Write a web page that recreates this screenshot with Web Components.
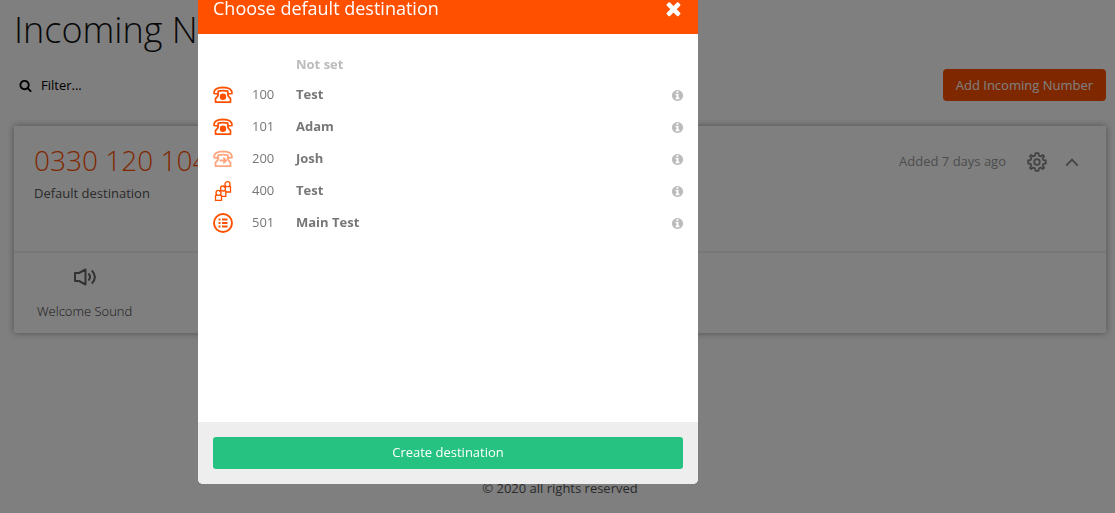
<!DOCTYPE html>
<html lang="en">
<head>
<meta charset="utf-8">
<meta name="viewport" content="width=device-width, initial-scale=1">
<title>Incoming Numbers</title>
<style>
  html, body { margin: 0; }
  body { background: #fff; color: #555; font: 13px/20px "Open Sans", "Noto Sans", sans-serif; }
</style>
</head>
<body>
<numbers-page>
  <number-card number="0330 120 104" added="Added 7 days ago"></number-card>
</numbers-page>
<destination-dialog heading="Choose default destination">
  <destination-row name="Not set"></destination-row>
  <destination-row icon="phone" ext="100" name="Test"></destination-row>
  <destination-row icon="phone" ext="101" name="Adam"></destination-row>
  <destination-row icon="forward" ext="200" name="Josh"></destination-row>
  <destination-row icon="group" ext="400" name="Test"></destination-row>
  <destination-row icon="menu" ext="501" name="Main Test"></destination-row>
</destination-dialog>

<script>
const handset = '<path d="M1 7.500Q.5 1.500 10 1.300Q19.500 1.500 19 7.500L14.800 8V5.200Q10 4.200 5.200 5.200V8Z"/><path d="M5.500 8Q5 10.500 2.500 12.500V16.200H17.500V12.500Q15 10.500 14.500 8"/>';
const ICONS = {
  phone: ['0 0 20 18', '<g fill="none" stroke="currentColor" stroke-width="1.700" stroke-linejoin="round">' + handset + '</g><circle cx="10" cy="10.800" r="3.200" fill="currentColor"/>'],
  forward: ['0 0 20 18', '<g fill="none" stroke="currentColor" stroke-width="1.800" stroke-linejoin="round">' + handset + '<path d="M6.500 10.500H13M10.300 7.700L13.200 10.500L10.300 13.300"/></g>'],
  group: ['0 0 20 20', '<g fill="none" stroke="currentColor" stroke-width="1.300"><circle cx="14.500" cy="3.200" r="2.500"/><path d="M12.500 5.500H11.500V7M12.800 11H17.500V5.500H16.200"/><circle cx="10" cy="7.500" r="2.500"/><path d="M8 10H7V11M8.500 15.300H12.800V10H11.700"/><circle cx="5.500" cy="11.800" r="2.500"/><path d="M4 14.300H2.500V19.300H8.500V14.300H7"/></g>'],
  menu: ['0 0 20 20', '<circle cx="10" cy="10" r="9" fill="none" stroke="currentColor" stroke-width="1.900"/><path d="M5.500 6.500H7.500M5.500 10H7.500M5.500 13.500H7.500M9 6.500H14.500M9 10H14.500M9 13.500H14.500" stroke="currentColor" stroke-width="1.800"/>'],
  search: ['0 0 1792 1792', '<path fill="currentColor" d="M1216 832q0-185-131.500-316.500t-316.500-131.500-316.500 131.500-131.500 316.500 131.500 316.500 316.500 131.500 316.500-131.500 131.500-316.500zm512 832q0 52-38 90t-90 38q-54 0-90-38l-343-342q-179 124-399 124-143 0-273.500-55.500t-225-150-150-225-55.500-273.500 55.500-273.500 150-225 225-150 273.500-55.500 273.500 55.500 225 150 150 225 55.500 273.500q0 220-124 399l343 343q37 37 37 90z"/>'],
  close: ['0 0 1792 1792', '<path fill="currentColor" d="M1490 1322q0 40-28 68l-136 136q-28 28-68 28t-68-28l-294-294-294 294q-28 28-68 28t-68-28l-136-136q-28-28-28-68t28-68l294-294-294-294q-28-28-28-68t28-68l136-136q28-28 68-28t68 28l294 294 294-294q28-28 68-28t68 28l136 136q28 28 28 68t-28 68l-294 294 294 294q28 28 28 68z"/>'],
  info: ['0 0 1792 1792', '<path fill="currentColor" d="M1152 1376v-160q0-14-9-23t-23-9h-96v-512q0-14-9-23t-23-9h-320q-14 0-23 9t-9 23v160q0 14 9 23t23 9h96v320h-96q-14 0-23 9t-9 23v160q0 14 9 23t23 9h448q14 0 23-9t9-23zm-128-896v-160q0-14-9-23t-23-9h-192q-14 0-23 9t-9 23v160q0 14 9 23t23 9h192q14 0 23-9t9-23zm640 416q0 209-103 385.500t-279.500 279.500-385.500 103-385.500-103-279.500-279.500-103-385.500 103-385.500 279.500-279.500 385.500-103 385.500 103 279.500 279.500 103 385.500z"/>'],
  gear: ['0 0 20 20', '<g fill="none" stroke="currentColor" stroke-width="1.800" stroke-linejoin="round"><circle cx="10" cy="10" r="2.800"/><path d="M8.500 1.200H11.500L12 3.700L13.700 4.400L15.800 3L17.100 4.300L15.600 6.300L16.300 8L18.800 8.500V11.500L16.300 12L15.600 13.700L17.100 15.800L15.800 17.100L13.700 15.600L12 16.300L11.500 18.800H8.500L8 16.300L6.300 15.600L4.200 17.100L2.900 15.800L4.400 13.700L3.700 12L1.200 11.500V8.500L3.700 8L4.400 6.300L2.900 4.300L4.200 3L6.300 4.400L8 3.700Z"/></g>'],
  chevron: ['0 0 14 14', '<path d="M1.200 10.700L7 4.700L12.800 10.700" fill="none" stroke="currentColor" stroke-width="1.900"/>'],
  sound: ['0 0 24 20', '<g fill="none" stroke="currentColor" stroke-width="2" stroke-linejoin="round"><path d="M2 6H6L12.500 2.500V17.500L6 14H2Z"/><path d="M15.500 6.500Q18.500 10 15.500 13.500M18.800 3.500Q25 10 18.800 16.500"/></g>']
};

class UiElement extends HTMLElement {
  connectedCallback() {
    if (this.shadowRoot) return;
    this.attachShadow({ mode: 'open' }).innerHTML = this.render();
  }
}

customElements.define('ui-icon', class extends UiElement {
  render() {
    const [box, body] = ICONS[this.getAttribute('name')];
    return `<style>
      :host { display: inline-block; flex: none; width: 20px; height: 20px; }
      svg { display: block; width: 100%; height: 100%; }
    </style><svg viewBox="${box}" aria-hidden="true">${body}</svg>`;
  }
});

customElements.define('number-card', class extends UiElement {
  render() {
    return `<style>
      :host { display: block; background: #fff; box-shadow: 0 0 7px rgba(0,0,0,.4); }
      header { display: flex; justify-content: space-between; padding: 14px 27px 0 20px; height: 111px; border-bottom: 2px solid #f0f0f0; }
      h2 { margin: 0; font-size: 28px; line-height: 40px; font-weight: 300; color: #ff5000; }
      p { margin: 0; padding-top: 3px; }
      .tools { display: flex; align-items: center; height: 44px; color: #999; }
      .tools span { padding-bottom: 2px; }
      button { display: flex; border: 0; background: none; padding: 0; color: #888; }
      .gear { margin: 0 18px 0 21px; }
      .chevron ui-icon { width: 14px; height: 14px; }
      .sound { display: inline-flex; flex-direction: column; align-items: center; padding: 14px 23px 12px; gap: 14px; font: inherit; font-weight: 300; color: #333; }
      .sound ui-icon { width: 24px; color: #666; }
    </style>
    <header>
      <div><h2>${this.getAttribute('number')}</h2><p>Default destination</p></div>
      <div class="tools"><span>${this.getAttribute('added')}</span>
        <button class="gear" aria-label="Settings"><ui-icon name="gear"></ui-icon></button>
        <button class="chevron" aria-label="Collapse"><ui-icon name="chevron"></ui-icon></button></div>
    </header>
    <button class="sound"><ui-icon name="sound"></ui-icon>Welcome Sound</button>`;
  }
});

customElements.define('numbers-page', class extends UiElement {
  render() {
    return `<style>
      :host { display: block; padding: 5px 9px 0 14px; }
      h1 { margin: 0; font-size: 36px; line-height: 50px; font-weight: 300; color: #111; }
      .bar { display: flex; justify-content: space-between; align-items: center; margin: 14px 0 25px; }
      label { display: flex; align-items: center; gap: 9px; padding-left: 5px; color: #000; }
      label ui-icon { width: 13px; height: 13px; }
      input { border: 0; padding: 0; outline: 0; font: inherit; color: #000; background: none; width: 140px; }
      input::placeholder { color: #000; opacity: 1; }
      .add { border: 0; border-radius: 4px; background: #ff5000; color: #fff; font: inherit; height: 32px; padding: 0 13px; }
      footer { padding-top: 145px; text-align: center; }
    </style>
    <h1>Incoming Numbers</h1>
    <div class="bar">
      <label><ui-icon name="search"></ui-icon><input type="text" placeholder="Filter..." aria-label="Filter"></label>
      <button class="add">Add Incoming Number</button>
    </div>
    <slot></slot>
    <footer>© 2020 all rights reserved</footer>`;
  }
});

customElements.define('destination-row', class extends UiElement {
  render() {
    const icon = this.getAttribute('icon');
    const name = this.getAttribute('name');
    const lead = icon ? `<ui-icon class="${icon}" name="${icon}"></ui-icon>` : '';
    const info = icon ? `<button aria-label="About ${name}"><ui-icon name="info"></ui-icon></button>` : '';
    return `<style>
      :host { display: grid; grid-template-columns: 39px 44px 1fr auto; align-items: center; height: ${icon ? 32 : 28}px; color: #777; }
      .lead { display: flex; padding-top: 2px; color: #ff5000; }
      .forward { opacity: .5; }
      b { font-weight: 700; color: ${icon ? '#777' : '#bbb'}; }
      button { display: flex; border: 0; background: none; padding: 2px 0 0; color: #bbb; }
      button ui-icon { width: 13px; height: 13px; }
    </style><span class="lead">${lead}</span><span>${this.getAttribute('ext') || ''}</span><b>${name}</b>${info}`;
  }
});

customElements.define('destination-dialog', class extends UiElement {
  render() {
    return `<style>
      :host { position: fixed; inset: 0; box-sizing: border-box; padding-left: 198px; background: rgba(0,0,0,.5); }
      section { width: 500px; max-width: 100%; background: #fff; border-radius: 0 0 5px 5px; overflow: hidden; }
      header { display: flex; justify-content: space-between; align-items: center; padding: 0 14px 17px 15px; background: #ff5000; color: #fff; }
      h2 { margin: 0; font-size: 18px; line-height: 17px; font-weight: 400; }
      .close { display: flex; border: 0; background: none; padding: 0; height: 17px; align-items: center; color: #fff; }
      .close ui-icon { width: 21px; height: 21px; }
      .list { box-sizing: border-box; min-height: 388px; padding: 16px 14px 16px 15px; }
      footer { background: #eee; padding: 15px; }
      .create { display: block; width: 100%; height: 32px; border: 0; border-radius: 3px; background: #26c281; color: #fff; font: inherit; padding: 0 0 2px; }
    </style>
    <section role="dialog" aria-label="Choose default destination">
      <header><h2>${this.getAttribute('heading')}</h2><button class="close" aria-label="Close"><ui-icon name="close"></ui-icon></button></header>
      <div class="list"><slot></slot></div>
      <footer><button class="create">Create destination</button></footer>
    </section>`;
  }
});
</script>
</body>
</html>
